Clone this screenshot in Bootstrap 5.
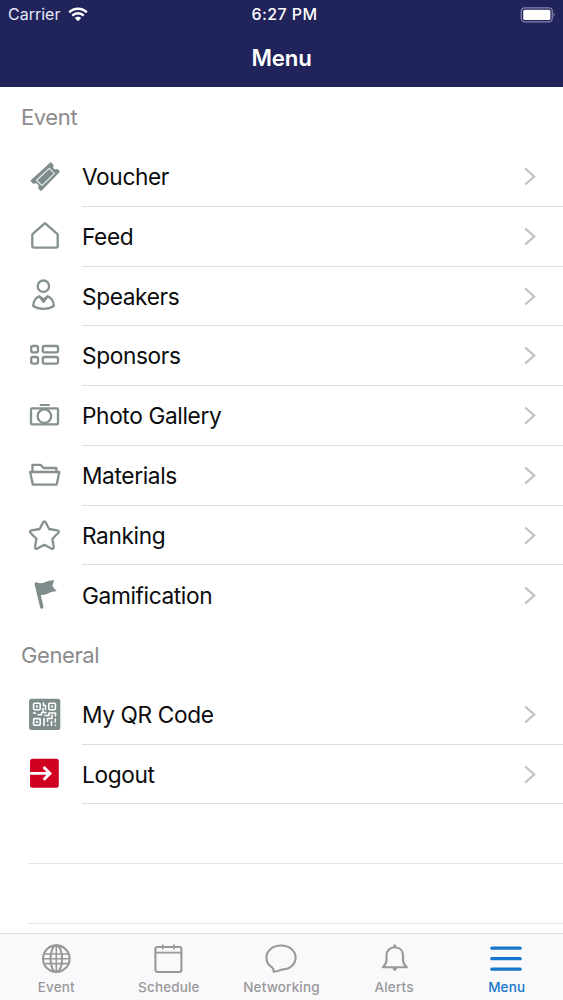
<!DOCTYPE html>
<html lang="en">
<head>
<meta charset="utf-8">
<meta name="viewport" content="width=device-width, initial-scale=1">
<title>Menu</title>
<link rel="stylesheet" href="https://cdn.jsdelivr.net/npm/bootstrap@5.3.0/dist/css/bootstrap.min.css">
<style>
  body { font-family: Inter, "Liberation Sans", sans-serif; height: 1000px; overflow: hidden; background: #fff; color: #0b0b0d; }
  svg { display: block; flex: none; fill: none; stroke-linecap: round; stroke-linejoin: round; }
  .app-header { height: 87.3px; background: #21235b; color: #fff; }
  .status-bar { height: 29px; font-size: 16px; line-height: 29px; }
  .status-bar > * { flex: 1 1 0; }
  .carrier { letter-spacing: 0; color: #e6e8f6; }
  .wifi { stroke: #fff; stroke-width: 2.5; stroke-linecap: butt; }
  .clock { font-weight: 500; letter-spacing: .4px; padding-left: 6px; }
  .screen-title { font-size: 22.2px; font-weight: 600; line-height: 57px; letter-spacing: -.15px; }
  .section-title, .menu-row, .empty-row { height: 59.75px; }
  .section-title { padding-left: 21px; font-size: 22px; color: #8b8b8d; letter-spacing: -.4px; }
  .menu-row { padding-left: 26px; }
  .menu-row .glyph { stroke: #869090; stroke-width: 2.3; }
  .menu-row .solid { fill: #7f8c8c; stroke: none; }
  .row-body { margin-left: 20px; padding: 1.6px 27px 0 0; font-size: 22.7px; letter-spacing: -.38px; border-bottom: 1px solid #dededf; }
  .menu-row.last .row-body { border-bottom: 0; }
  .chevron { stroke: #c3c3c7; stroke-width: 2.3; stroke-linecap: butt; stroke-linejoin: miter; }
  .empty-row { margin-left: 28px; border-bottom: 1px solid #e4e4e5; }
  .tab-bar { height: 67.5px; background: #f9f8fa; border-top: 1.5px solid #dddcdf; }
  .tab-item { flex: 1 1 0; color: #99999c; font-size: 13.5px; font-weight: 500; line-height: 18px; letter-spacing: .15px; padding-top: 6px; text-decoration: none; }
  .tab-item svg { stroke: currentColor; stroke-width: 2.1; margin-bottom: 2.5px; }
  .tab-item.active { color: #1676cc; }
</style>
</head>
<body class="d-flex flex-column">
<header class="app-header flex-shrink-0">
  <div class="status-bar d-flex align-items-center">
    <div class="d-flex align-items-center carrier ps-2">
      <span>Carrier</span>
      <svg class="wifi ms-2" width="20" height="15" viewBox="0 0 20 15"><path d="M1.2 5.3C6.2.6 13.8.6 18.8 5.3M4.3 8.6C7.5 5.6 12.5 5.6 15.7 8.6"/><path d="M6.8 11C8.5 9.3 11.5 9.3 13.2 11L10 14.2Z" fill="#fff" stroke="none"/></svg>
    </div>
    <div class="clock text-center">6:27 PM</div>
    <div class="d-flex justify-content-end pe-2">
      <svg width="35" height="16" viewBox="0 0 35 16"><rect x="1.3" y=".8" width="31" height="14" rx="3.5" stroke="#8583ad" stroke-width="1.3"/><rect x="3.2" y="2.7" width="27.2" height="10.2" rx="1.5" fill="#fff"/><path d="M33.6 5.5Q36 7.8 33.6 10Z" fill="#8583ad"/></svg>
    </div>
  </div>
  <h1 class="screen-title text-center m-0">Menu</h1>
</header>

<main class="flex-grow-1 overflow-hidden">
  <h2 class="section-title d-flex align-items-center m-0 fw-normal">Event</h2>

  <div class="menu-row d-flex align-items-center">
    <svg class="glyph" width="36" height="36" viewBox="0 0 36 36"><path class="solid" d="M24.8 3L27.6 6Q26.6 9 28.2 10Q30 11 31.4 9.8L34 12.7L15 32.2L12.2 29.3Q13.3 26.5 11.5 25Q9.7 23.7 7.4 25L4.3 21.8Z"/><path d="M23.2 9.4L28.4 14.4L16 26.6L10.6 21.3Z" stroke="#e4eaea" stroke-width="1.3"/></svg>
    <div class="row-body d-flex align-items-center justify-content-between flex-grow-1 h-100"><span>Voucher</span><svg class="chevron" width="12" height="20" viewBox="0 0 12 20"><path d="M1.2 1.5L10.2 9.5L1.2 17.5"/></svg></div>
  </div>
  <div class="menu-row d-flex align-items-center">
    <svg class="glyph" width="36" height="36" viewBox="0 0 36 36"><path d="M19 4.2L31.2 14.8Q31.7 15.3 31.7 16V27Q31.7 28.6 30.1 28.6H7.9Q6.3 28.6 6.3 27V16Q6.3 15.3 6.8 14.8Z"/></svg>
    <div class="row-body d-flex align-items-center justify-content-between flex-grow-1 h-100"><span>Feed</span><svg class="chevron" width="12" height="20" viewBox="0 0 12 20"><path d="M1.2 1.5L10.2 9.5L1.2 17.5"/></svg></div>
  </div>
  <div class="menu-row d-flex align-items-center">
    <svg class="glyph" width="36" height="36" viewBox="0 0 36 36"><circle cx="17.4" cy="8.2" r="5.7"/><path d="M13.3 18.3Q7.2 21 7.2 28Q11.5 30.8 17.5 30.8Q23.5 30.8 27.8 28Q27.8 21 21.7 18.3L17.5 23.8Z"/><path d="M15.5 19.2L17.5 21.5L19.5 19.2" stroke-width="1.5"/></svg>
    <div class="row-body d-flex align-items-center justify-content-between flex-grow-1 h-100"><span>Speakers</span><svg class="chevron" width="12" height="20" viewBox="0 0 12 20"><path d="M1.2 1.5L10.2 9.5L1.2 17.5"/></svg></div>
  </div>
  <div class="menu-row d-flex align-items-center">
    <svg class="glyph" width="36" height="36" viewBox="0 0 36 36"><rect x="5.2" y="8" width="6.8" height="6.4" rx="1.6"/><rect x="16.8" y="8" width="15.2" height="6.4" rx="1.6"/><rect x="5.2" y="19" width="6.8" height="6.6" rx="1.6"/><rect x="16.8" y="19" width="15.2" height="6.6" rx="1.6"/></svg>
    <div class="row-body d-flex align-items-center justify-content-between flex-grow-1 h-100"><span>Sponsors</span><svg class="chevron" width="12" height="20" viewBox="0 0 12 20"><path d="M1.2 1.5L10.2 9.5L1.2 17.5"/></svg></div>
  </div>
  <div class="menu-row d-flex align-items-center">
    <svg class="glyph" width="36" height="36" viewBox="0 0 36 36"><rect x="5" y="10.4" width="27" height="16" rx="1.2"/><circle cx="18.4" cy="18.2" r="6.8"/><path d="M14.5 7H23" stroke-width="1.8"/></svg>
    <div class="row-body d-flex align-items-center justify-content-between flex-grow-1 h-100"><span>Photo Gallery</span><svg class="chevron" width="12" height="20" viewBox="0 0 12 20"><path d="M1.2 1.5L10.2 9.5L1.2 17.5"/></svg></div>
  </div>
  <div class="menu-row d-flex align-items-center">
    <svg class="glyph" width="36" height="36" viewBox="0 0 36 36"><path d="M4.2 14H33.3L30.7 26.6H6.8Z"/><path d="M6.5 13.5V6.8H14.6L17.6 10H30.4V13.5"/></svg>
    <div class="row-body d-flex align-items-center justify-content-between flex-grow-1 h-100"><span>Materials</span><svg class="chevron" width="12" height="20" viewBox="0 0 12 20"><path d="M1.2 1.5L10.2 9.5L1.2 17.5"/></svg></div>
  </div>
  <div class="menu-row d-flex align-items-center">
    <svg class="glyph" width="36" height="36" viewBox="0 0 36 36"><path d="M17 5.4Q18.4 3.2 19.8 5.4L23.1 12L31.3 13.3Q34 14 32.2 16L26.4 21.7L27.7 29.8Q27.7 32.5 25.3 31.6L18.4 27.8L11.3 31.6Q9 32.4 9.1 29.8L10.4 21.7L4.6 16Q2.9 14 5.5 13.3L13.7 12Z"/></svg>
    <div class="row-body d-flex align-items-center justify-content-between flex-grow-1 h-100"><span>Ranking</span><svg class="chevron" width="12" height="20" viewBox="0 0 12 20"><path d="M1.2 1.5L10.2 9.5L1.2 17.5"/></svg></div>
  </div>
  <div class="menu-row last d-flex align-items-center">
    <svg class="glyph" width="36" height="36" viewBox="0 0 36 36"><path d="M10.3 7L15.8 30" stroke-width="3.4" stroke="#7f8c8c"/><path class="solid" d="M10 5.5Q15.5 7.3 19.5 5Q23.5 3 28.2 3.3L26.3 9L30.7 14.2Q26 14 22.5 16.3Q18.5 18.5 13 17.8Z"/></svg>
    <div class="row-body d-flex align-items-center justify-content-between flex-grow-1 h-100"><span>Gamification</span><svg class="chevron" width="12" height="20" viewBox="0 0 12 20"><path d="M1.2 1.5L10.2 9.5L1.2 17.5"/></svg></div>
  </div>

  <h2 class="section-title d-flex align-items-center m-0 fw-normal">General</h2>

  <div class="menu-row d-flex align-items-center">
    <svg class="glyph" width="36" height="36" viewBox="0 0 36 36"><rect class="solid" x="3" y="1.7" width="31.3" height="31.3" rx="2.5"/><g stroke="#fff" stroke-width="1.6"><rect x="7.6" y="6.2" width="6.6" height="6.6" rx="1"/><rect x="22.8" y="6.2" width="6.6" height="6.6" rx="1"/><rect x="7.6" y="21.6" width="6.6" height="6.6" rx="1"/><path d="M17.5 6V8.5H19.5V12.5M17 11.5V15.5H20M7.5 16H9.5M12 17.8H15.5V15.8M19 18.5H23V16H29.5V19M26 18V21.5H22M18 21.5V28.5M21.5 21.5V24.5M25.5 24.5V28.3M29.3 22V25M21.6 28.3H22M29.3 28.3H29.4"/></g><g fill="#fff" stroke="none"><rect x="9.9" y="8.5" width="2" height="2"/><rect x="25.1" y="8.5" width="2" height="2"/><rect x="9.9" y="23.9" width="2" height="2"/></g></svg>
    <div class="row-body d-flex align-items-center justify-content-between flex-grow-1 h-100"><span>My QR Code</span><svg class="chevron" width="12" height="20" viewBox="0 0 12 20"><path d="M1.2 1.5L10.2 9.5L1.2 17.5"/></svg></div>
  </div>
  <div class="menu-row d-flex align-items-center">
    <svg class="glyph" width="36" height="36" viewBox="0 0 36 36"><rect x="4" y="2.8" width="28.8" height="29" rx="2.5" fill="#d00021" stroke="none"/><path d="M4 17.4H23.5M17.6 11L24 17.4L17.6 23.8" stroke="#fff" stroke-width="2.9" stroke-linecap="butt" stroke-linejoin="miter"/></svg>
    <div class="row-body d-flex align-items-center justify-content-between flex-grow-1 h-100"><span>Logout</span><svg class="chevron" width="12" height="20" viewBox="0 0 12 20"><path d="M1.2 1.5L10.2 9.5L1.2 17.5"/></svg></div>
  </div>
  <div class="empty-row"></div>
  <div class="empty-row"></div>
</main>

<nav class="tab-bar d-flex flex-shrink-0">
  <a class="tab-item d-flex flex-column align-items-center"><svg width="36" height="36" viewBox="0 0 36 36"><circle cx="18.3" cy="18.7" r="13.3"/><ellipse cx="18.3" cy="18.7" rx="5.8" ry="13.3"/><path d="M18.3 5.4V32M5 18.7H31.6M6.8 14H29.8M6.8 23.6H29.8" stroke-width="1.6"/></svg><span>Event</span></a>
  <a class="tab-item d-flex flex-column align-items-center"><svg width="36" height="36" viewBox="0 0 36 36"><rect x="4.4" y="7" width="26" height="25" rx="2.2"/><path d="M4.4 12.6H30.4M11.7 5V8.8M23 5V8.8" stroke-width="1.7"/></svg><span>Schedule</span></a>
  <a class="tab-item d-flex flex-column align-items-center"><svg width="36" height="36" viewBox="0 0 36 36"><path d="M10.5 31.7Q16 31 18.5 29.6C27 29.6 32.6 24 32.6 17.8C32.6 10.8 26.4 5.5 18 5.5C9.6 5.5 3.4 10.8 3.4 17.8C3.4 22 5.5 25.3 9.2 27.5Q11 29 10.5 31.7Z"/></svg><span>Networking</span></a>
  <a class="tab-item d-flex flex-column align-items-center"><svg width="36" height="36" viewBox="0 0 36 36"><path d="M6.8 27.3Q10.5 24 10.5 20V15.5C10.5 10.5 14 7.3 18.8 7.3C23.6 7.3 27 10.5 27 15.5V20Q27 24 30.8 27.3Z"/><path d="M18.8 5.5V6.5" stroke-width="2.5"/><path d="M16.3 28H21.3Q20.5 31 18.8 31Q17.1 31 16.3 28Z" fill="currentColor" stroke="none"/></svg><span>Alerts</span></a>
  <a class="tab-item active d-flex flex-column align-items-center"><svg width="36" height="36" viewBox="0 0 36 36"><path d="M2.8 8.2H31.2M2.8 18.7H31.2M2.8 29.2H31.2" stroke-width="3.2"/></svg><span>Menu</span></a>
</nav>
<script src="https://cdn.jsdelivr.net/npm/bootstrap@5.3.0/dist/js/bootstrap.bundle.min.js"></script>
</body>
</html>
